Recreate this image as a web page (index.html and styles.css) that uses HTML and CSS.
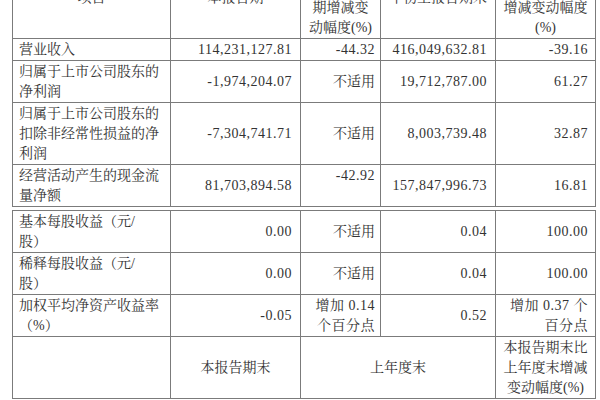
FILE: index.html
```html
<!DOCTYPE html>
<html lang="zh-CN">
<head>
<meta charset="utf-8">
<title>主要会计数据和财务指标</title>
<link rel="stylesheet" href="styles.css">
</head>
<body>
<div class="sheet">
  <table class="t t1">
    <colgroup><col class="w1"><col class="w2"><col class="w3"><col class="w4"><col class="w5"></colgroup>
    <tr class="head">
      <td class="ctr">项目</td>
      <td class="ctr">本报告期</td>
      <td class="ctr">本报告期<br>比上年同<br>期增减变<br>动幅度(%)</td>
      <td class="ctr">年初至报告期末</td>
      <td class="ctr">年初至报告期<br>末比上年同期<br>增减变动幅度<br>(%)</td>
    </tr>
    <tr>
      <td class="lbl">营业收入</td>
      <td class="c2 num">114,231,127.81</td>
      <td class="c3 num">-44.32</td>
      <td class="c4 num">416,049,632.81</td>
      <td class="c5 num">-39.16</td>
    </tr>
    <tr>
      <td class="lbl">归属于上市公司股东的<br>净利润</td>
      <td class="c2 num">-1,974,204.07</td>
      <td class="c3">不适用</td>
      <td class="c4 num">19,712,787.00</td>
      <td class="c5 num">61.27</td>
    </tr>
    <tr>
      <td class="lbl">归属于上市公司股东的<br>扣除非经常性损益的净<br>利润</td>
      <td class="c2 num">-7,304,741.71</td>
      <td class="c3">不适用</td>
      <td class="c4 num">8,003,739.48</td>
      <td class="c5 num">32.87</td>
    </tr>
    <tr>
      <td class="lbl">经营活动产生的现金流<br>量净额</td>
      <td class="c2 num">81,703,894.58</td>
      <td class="c3 num top">-42.92</td>
      <td class="c4 num">157,847,996.73</td>
      <td class="c5 num">16.81</td>
    </tr>
  </table>
  <table class="t t2">
    <colgroup><col class="w1"><col class="w2"><col class="w3"><col class="w4"><col class="w5"></colgroup>
    <tr>
      <td class="lbl">基本每股收益（元/<br>股）</td>
      <td class="c2 num">0.00</td>
      <td class="c3">不适用</td>
      <td class="c4 num">0.04</td>
      <td class="c5 num">100.00</td>
    </tr>
    <tr>
      <td class="lbl">稀释每股收益（元/<br>股）</td>
      <td class="c2 num">0.00</td>
      <td class="c3">不适用</td>
      <td class="c4 num">0.04</td>
      <td class="c5 num">100.00</td>
    </tr>
    <tr>
      <td class="lbl">加权平均净资产收益率<br>（%）</td>
      <td class="c2 num">-0.05</td>
      <td class="c3 num">增加 0.14<br>个百分点</td>
      <td class="c4 num">0.52</td>
      <td class="c5 num">增加 0.37 个<br>百分点</td>
    </tr>
    <tr>
      <td class="lbl"></td>
      <td class="ctr">本报告期末</td>
      <td class="ctr" colspan="2">上年度末</td>
      <td class="ctr">本报告期末比<br>上年度末增减<br>变动幅度(%)</td>
    </tr>
  </table>
</div>
</body>
</html>
```

FILE: styles.css
```css
html, body {
  margin: 0;
  padding: 0;
  background: #ffffff;
  overflow: hidden;
}

body {
  color: #333333;
  font-family: "Liberation Serif", "Noto Serif CJK SC", "Noto Sans CJK SC", serif;
  font-size: 14px;
  line-height: 20px;
}

.sheet {
  margin: -44px 0 0 12px;
}

.t {
  border-collapse: collapse;
  table-layout: fixed;
  width: 584px;
}

.t2 {
  margin-top: 3px;
}

.w1 { width: 158px; }
.w2 { width: 130px; }
.w3 { width: 80px; }
.w4 { width: 115px; }
.w5 { width: 100px; }

.t td {
  border: 1px solid #7b7b7b;
  padding: 1px 7px 0 6px;
  vertical-align: middle;
  text-align: right;
  white-space: nowrap;
}

.t td.lbl {
  text-align: left;
  padding-left: 6px;
}

.t td.ctr {
  text-align: center;
  padding-left: 2px;
  padding-right: 2px;
}

.t td.c2 { padding-right: 8px; }
.t td.c3 { padding-right: 5px; }
.t td.c4 { padding-right: 8px; }
.t td.c5 { padding-right: 7px; }

.t td.num {
  letter-spacing: 0.5px;
}

.t td.top {
  vertical-align: top;
}
```
